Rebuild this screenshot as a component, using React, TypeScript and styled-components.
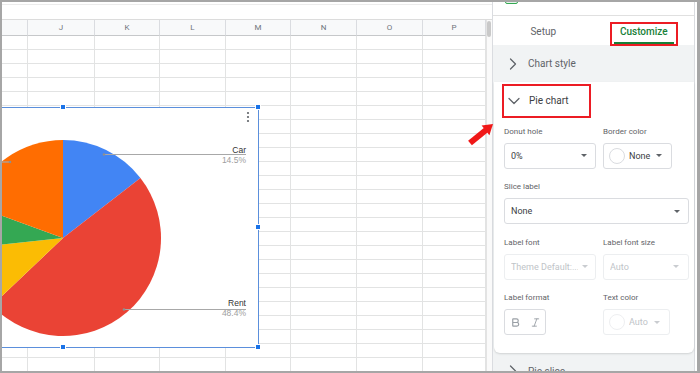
import styled, { createGlobalStyle } from 'styled-components';
import { ChevronRight, ChevronDown, Bold, Italic } from 'lucide-react';

const GlobalStyle = createGlobalStyle`
  html, body {
    margin: 0;
    padding: 0;
    background: #fff;
  }
  body {
    font-family: Roboto, 'Liberation Sans', sans-serif;
  }
  * {
    box-sizing: border-box;
  }
`;

const Frame = styled.div`
  position: relative;
  display: flex;
  width: 700px;
  height: 373px;
  border-style: solid;
  border-color: #a6a6a6;
  border-width: 2px 3px 2px 2px;
  background: #fff;
  overflow: hidden;
`;

/* ---------- spreadsheet ---------- */

const Sheet = styled.div`
  position: relative;
  display: flex;
  flex-direction: column;
  width: 490px;
  flex: none;
`;

const TopStrip = styled.div`
  height: 18px;
  flex: none;
  border-bottom: 1px solid #dcdcdc;
  background: linear-gradient(#fff 0 2px, #ececec 2px 3px, #fff 3px);
`;

const SheetBody = styled.div`
  display: flex;
  flex: 1;
  min-height: 0;
`;

const Grid = styled.div`
  display: grid;
  grid-template-columns: 26px 67px 65px 66px 65px 66px 66px 63px;
  grid-template-rows: 16px;
  grid-auto-rows: 14px;
  width: 484px;
  overflow: hidden;
`;

const HeadCell = styled.div`
  display: flex;
  align-items: center;
  justify-content: center;
  background: #f8f9fa;
  border-right: 1px solid #dadce0;
  border-bottom: 1px solid #c6c8ca;
  font-size: 8px;
  color: #70757a;
`;

const Cell = styled.div`
  border-right: 1px solid #e2e3e3;
  border-bottom: 1px solid #e2e3e3;
`;

const ScrollTrack = styled.div`
  width: 6px;
  flex: none;
  background: #fafafa;
  border-left: 1px solid #e3e3e3;
`;

const Thumb = styled.div`
  width: 4px;
  height: 16px;
  margin-top: 1px;
  border-radius: 2px;
  background: #c9c9c9;
`;

/* ---------- chart ---------- */

const Chart = styled.div`
  position: absolute;
  left: -4px;
  top: 105px;
  width: 261px;
  height: 241px;
  border: 1px solid #5b8fdc;
  background: #fff;
`;

const ChartDrawing = styled.svg`
  position: absolute;
  left: -1px;
  top: -1px;
  width: 261px;
  height: 241px;
`;

const Handle = styled.div<{ $x: number; $y: number }>`
  position: absolute;
  left: ${(p) => p.$x}px;
  top: ${(p) => p.$y}px;
  width: 6px;
  height: 6px;
  background: #1a73e8;
  border: 1px solid #fff;
`;

/* ---------- side panel ---------- */

const Panel = styled.div`
  display: flex;
  flex-direction: column;
  width: 203px;
  flex: none;
  margin-right: 2px;
  background: #f1f3f4;
  border-left: 1px solid #dadce0;
  border-right: 1px solid #dadce0;
`;

const PanelTop = styled.div`
  height: 14px;
  flex: none;
  background: #fff;
  border-bottom: 1px solid #e0e0e0;
  overflow: hidden;
`;

const TypeIcon = styled.div`
  width: 13px;
  height: 10px;
  margin: -8px 0 0 12px;
  border: 1.5px solid #34a853;
  border-radius: 2px;
  background: #e6f4ea;
`;

const Tabs = styled.div`
  display: grid;
  grid-template-columns: 1fr 1fr;
  align-items: start;
  justify-items: center;
  height: 29px;
  flex: none;
  padding-top: 6px;
  background: #fff;
`;

const Highlight = styled.div<{ $marked?: boolean }>`
  display: flex;
  height: 24px;
  padding: 0 2px;
  border: 2px solid ${(p) => (p.$marked ? '#ec1c24' : 'transparent')};
`;

const TabText = styled.div<{ $active?: boolean }>`
  height: 19px;
  margin-top: 1px;
  padding: 0 6px 2px;
  line-height: 14px;
  font-size: 10px;
  font-weight: ${(p) => (p.$active ? 500 : 400)};
  color: ${(p) => (p.$active ? '#188038' : '#5f6368')};
  border-bottom: 2px solid ${(p) => (p.$active ? '#188038' : 'transparent')};
`;

const SectionHead = styled.div`
  display: flex;
  align-items: center;
  height: 37px;
  flex: none;
  padding-left: 8px;
`;

const Marker = styled.div<{ $marked?: boolean }>`
  display: flex;
  align-items: center;
  gap: 5px;
  height: 34px;
  padding-right: 20px;
  border: 2px solid ${(p) => (p.$marked ? '#ec1c24' : 'transparent')};
  color: #5f6368;
`;

const SectionTitle = styled.span<{ $dark?: boolean }>`
  font-size: 10px;
  color: ${(p) => (p.$dark ? '#3c4043' : '#5f6368')};
`;

const Card = styled.div`
  flex: none;
  margin-left: 1px;
  background: #fff;
  border-radius: 0 0 6px 6px;
  box-shadow: 0 1px 2px rgba(60, 64, 67, 0.18);
`;

const Form = styled.div`
  display: grid;
  grid-template-columns: 92px 86px;
  column-gap: 7px;
  row-gap: 12.5px;
  padding: 6.5px 6px 17.5px 10px;
`;

const Field = styled.div<{ $wide?: boolean }>`
  display: flex;
  flex-direction: column;
  align-items: flex-start;
  grid-column: ${(p) => (p.$wide ? '1 / span 2' : 'auto')};
`;

const Label = styled.div`
  height: 11px;
  margin-bottom: 6px;
  line-height: 11px;
  font-size: 8px;
  color: #5f6368;
`;

const Select = styled.div<{ $w: number; $off?: boolean; $pr?: number; $pl?: number }>`
  display: flex;
  align-items: center;
  gap: 4px;
  width: ${(p) => p.$w}px;
  height: 26px;
  padding: 0 ${(p) => p.$pr ?? 8}px 0 ${(p) => p.$pl ?? 5}px;
  border: 1px solid ${(p) => (p.$off ? '#eceef0' : '#dadce0')};
  border-radius: 3px;
  font-size: 9px;
  color: ${(p) => (p.$off ? '#c0c4c8' : '#3c4043')};
`;

const SelectText = styled.span`
  flex: 1;
  white-space: nowrap;
  overflow: hidden;
`;

const Caret = styled.span<{ $off?: boolean }>`
  width: 0;
  height: 0;
  flex: none;
  border-left: 3px solid transparent;
  border-right: 3px solid transparent;
  border-top: 3.5px solid ${(p) => (p.$off ? '#c9ccd0' : '#5f6368')};
`;

const Swatch = styled.span<{ $off?: boolean }>`
  width: 16px;
  height: 16px;
  flex: none;
  border-radius: 50%;
  border: 1px solid ${(p) => (p.$off ? '#eeeff1' : '#dadce0')};
  background: #fff;
`;

const FormatBox = styled.div`
  display: flex;
  align-items: center;
  gap: 9px;
  width: 42px;
  height: 26px;
  padding-left: 5px;
  border: 1px solid #dadce0;
  border-radius: 3px;
  color: #9aa0a6;
`;

/* ---------- annotation ---------- */

const Arrow = styled.svg`
  position: absolute;
  left: 464px;
  top: 119px;
  width: 30px;
  height: 30px;
`;

const columns = ['', 'J', 'K', 'L', 'M', 'N', 'O', 'P'];

const slices = [
  { color: '#4285f4', from: 0, to: 52.2 },
  { color: '#ea4335', from: 52.2, to: 226.4 },
  { color: '#fbbc04', from: 226.4, to: 264 },
  { color: '#34a853', from: 264, to: 290 },
  { color: '#ff6d01', from: 290, to: 360 },
];

const cx = 63;
const cy = 238;
const r = 98;

function point(deg: number) {
  const a = (deg * Math.PI) / 180;
  return `${cx + r * Math.sin(a)} ${cy - r * Math.cos(a)}`;
}

function slicePath(from: number, to: number) {
  const large = to - from > 180 ? 1 : 0;
  return `M ${cx} ${cy} L ${point(from)} A ${r} ${r} 0 ${large} 1 ${point(to)} Z`;
}

function PieChart() {
  return (
    <Chart>
      <ChartDrawing viewBox="-2 107 261 241">
        {slices.map((s) => (
          <path key={s.color} d={slicePath(s.from, s.to)} fill={s.color} />
        ))}
        <g stroke="#a8a8a8" strokeWidth="1.2">
          <line x1="104" y1="154.5" x2="246" y2="154.5" />
          <line x1="124" y1="309.5" x2="246" y2="309.5" />
          <line x1="-2" y1="162" x2="10" y2="162" />
        </g>
        <g fill="#8f8f8f">
          <circle cx="104" cy="154.5" r="1.3" />
          <circle cx="124" cy="309.5" r="1.3" />
          <circle cx="10" cy="162" r="1.3" />
        </g>
        <g fontFamily="'Liberation Sans', Arial, sans-serif" fontSize="8.5" textAnchor="end">
          <text x="246" y="153" fill="#333">Car</text>
          <text x="246" y="163" fill="#9e9e9e">14.5%</text>
          <text x="246" y="306" fill="#333">Rent</text>
          <text x="246" y="316" fill="#9e9e9e">48.4%</text>
        </g>
        <g fill="#5f6368">
          <circle cx="248" cy="113" r="1.1" />
          <circle cx="248" cy="117" r="1.1" />
          <circle cx="248" cy="121" r="1.1" />
        </g>
      </ChartDrawing>
      <Handle $x={61} $y={-4} />
      <Handle $x={256} $y={-4} />
      <Handle $x={256} $y={116} />
      <Handle $x={61} $y={236} />
      <Handle $x={256} $y={236} />
    </Chart>
  );
}

function SpreadSheet() {
  return (
    <Sheet>
      <TopStrip />
      <SheetBody>
        <Grid>
          {columns.map((c, i) => (
            <HeadCell key={'h' + i}>{c}</HeadCell>
          ))}
          {Array.from({ length: 25 * columns.length }, (_, i) => (
            <Cell key={i} />
          ))}
        </Grid>
        <ScrollTrack>
          <Thumb />
        </ScrollTrack>
      </SheetBody>
      <PieChart />
    </Sheet>
  );
}

function ChartEditor() {
  return (
    <Panel>
      <PanelTop>
        <TypeIcon />
      </PanelTop>
      <Tabs>
        <Highlight>
          <TabText>Setup</TabText>
        </Highlight>
        <Highlight $marked>
          <TabText $active>Customize</TabText>
        </Highlight>
      </Tabs>
      <SectionHead>
        <Marker>
          <ChevronRight size={20} strokeWidth={1.5} />
          <SectionTitle>Chart style</SectionTitle>
        </Marker>
      </SectionHead>
      <Card>
        <SectionHead>
          <Marker $marked>
            <ChevronDown size={20} strokeWidth={1.5} />
            <SectionTitle $dark>Pie chart</SectionTitle>
          </Marker>
        </SectionHead>
        <Form>
          <Field>
            <Label>Donut hole</Label>
            <Select $w={92} $pl={6}>
              <SelectText>0%</SelectText>
              <Caret />
            </Select>
          </Field>
          <Field>
            <Label>Border color</Label>
            <Select $w={69} $pr={9}>
              <Swatch />
              <SelectText>None</SelectText>
              <Caret />
            </Select>
          </Field>
          <Field $wide>
            <Label>Slice label</Label>
            <Select $w={185} $pl={6}>
              <SelectText>None</SelectText>
              <Caret />
            </Select>
          </Field>
          <Field>
            <Label>Label font</Label>
            <Select $w={92} $pl={6} $pr={7} $off>
              <SelectText>Theme Default:...</SelectText>
              <Caret $off />
            </Select>
          </Field>
          <Field>
            <Label>Label font size</Label>
            <Select $w={86} $pl={6} $pr={9} $off>
              <SelectText>Auto</SelectText>
              <Caret $off />
            </Select>
          </Field>
          <Field>
            <Label>Label format</Label>
            <FormatBox>
              <Bold size={11} strokeWidth={2.6} />
              <Italic size={11} strokeWidth={2} />
            </FormatBox>
          </Field>
          <Field>
            <Label>Text color</Label>
            <Select $w={67} $pr={9} $off>
              <Swatch $off />
              <SelectText>Auto</SelectText>
              <Caret $off />
            </Select>
          </Field>
        </Form>
      </Card>
      <SectionHead>
        <Marker>
          <ChevronRight size={20} strokeWidth={1.5} />
          <SectionTitle>Pie slice</SectionTitle>
        </Marker>
      </SectionHead>
    </Panel>
  );
}

export default function App() {
  return (
    <>
      <GlobalStyle />
      <Frame>
        <SpreadSheet />
        <ChartEditor />
        <Arrow viewBox="0 0 30 30">
          <line x1="4" y1="22" x2="20" y2="9" stroke="#f01818" strokeWidth="6" />
          <polygon points="27,3 23.4,14.2 15.6,4.6" fill="#f01818" />
        </Arrow>
      </Frame>
    </>
  );
}
